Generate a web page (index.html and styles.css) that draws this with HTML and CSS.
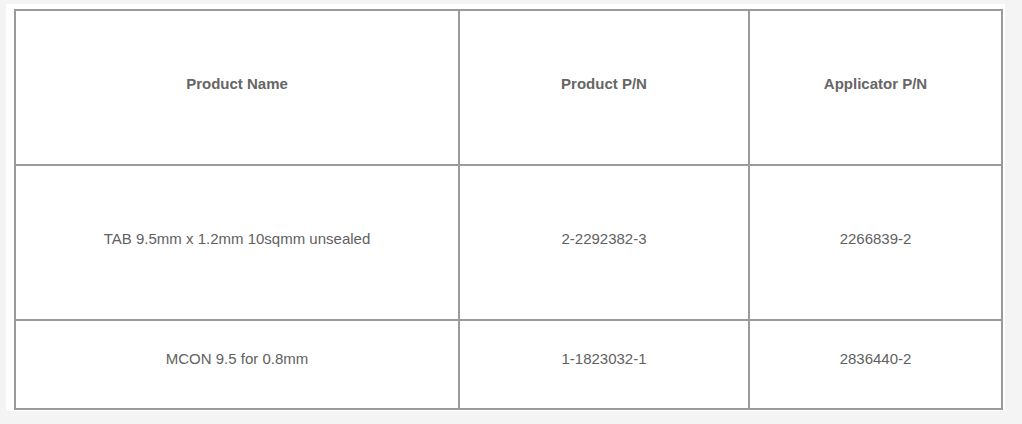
FILE: index.html
```html
<!DOCTYPE html>
<html lang="en">
<head>
<meta charset="utf-8">
<title>Product table</title>
<link rel="stylesheet" href="styles.css">
</head>
<body>
<div class="panel">
  <table class="spec">
    <colgroup>
      <col class="c1">
      <col class="c2">
      <col class="c3">
    </colgroup>
    <thead>
      <tr class="head">
        <th>Product Name</th>
        <th>Product P/N</th>
        <th>Applicator P/N</th>
      </tr>
    </thead>
    <tbody>
      <tr class="r1">
        <td>TAB 9.5mm x 1.2mm 10sqmm unsealed</td>
        <td>2-2292382-3</td>
        <td>2266839-2</td>
      </tr>
      <tr class="r2">
        <td>MCON 9.5 for 0.8mm</td>
        <td>1-1823032-1</td>
        <td>2836440-2</td>
      </tr>
    </tbody>
  </table>
</div>
</body>
</html>
```
FILE: styles.css
```css
html, body {
  margin: 0;
  padding: 0;
  background: #f4f4f4;
}
body {
  width: 1022px;
  height: 424px;
  overflow: hidden;
  font-family: "Liberation Sans", Arial, Helvetica, sans-serif;
}
.panel {
  margin: 4px 0 0 6px;
  width: 999px;
  height: 407px;
  background: #ffffff;
  padding: 5px 0 0 8px;
  box-sizing: border-box;
}
.spec {
  table-layout: fixed;
  border-collapse: separate;
  border-spacing: 2px;
  background: #9a9a9a;
  width: 989px;
}
.c1 { width: 442px; }
.c2 { width: 288px; }
.c3 { width: 251px; }
.spec th, .spec td {
  background: #ffffff;
  padding: 0 0 9px 0;
  text-align: center;
  vertical-align: middle;
  font-size: 15px;
  line-height: 17px;
  color: #616161;
}
.spec th {
  font-weight: bold;
  color: #666666;
}
.head th { height: 144px; }
.r1 td { height: 144px; }
.r2 .cell, .r2 td { height: 74px; padding-bottom: 13px; }
```
